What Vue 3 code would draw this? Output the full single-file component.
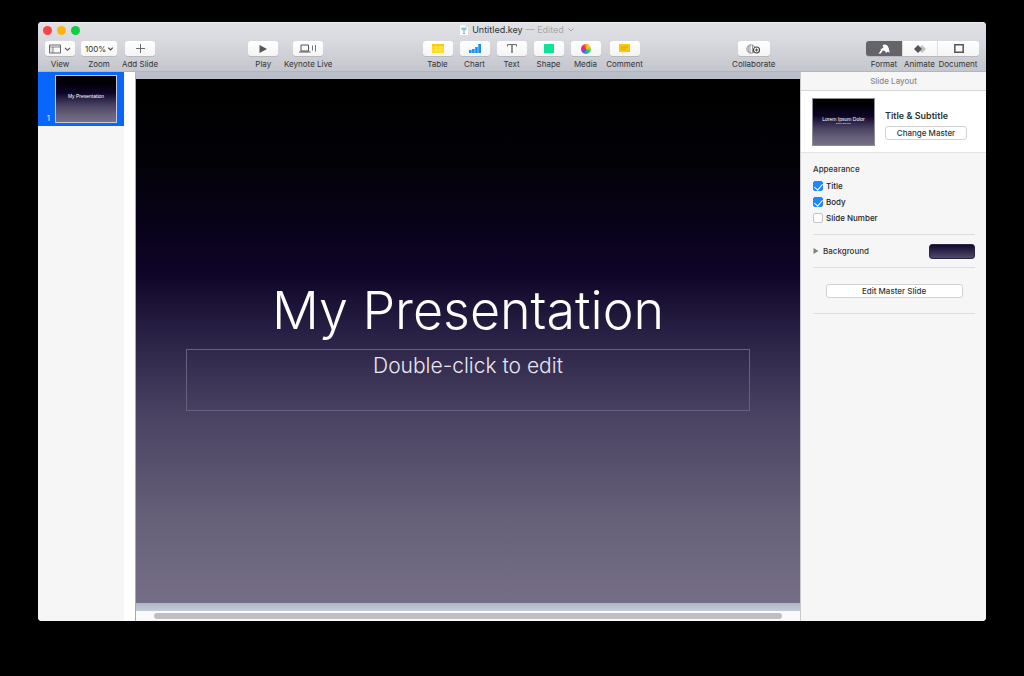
<script setup>
import { ref } from 'vue'

const left = [
  { id: 'view', label: 'View', w: 'w30' },
  { id: 'zoom', label: 'Zoom', w: 'w36' },
  { id: 'add', label: 'Add Slide', w: 'w34' }
]
const play = [
  { id: 'play', label: 'Play', w: 'w30' },
  { id: 'live', label: 'Keynote Live', w: 'w46' }
]
const insert = [
  { id: 'table', label: 'Table', w: 'w30' },
  { id: 'chart', label: 'Chart', w: 'w30' },
  { id: 'text', label: 'Text', w: 'w30' },
  { id: 'shape', label: 'Shape', w: 'w30' },
  { id: 'media', label: 'Media', w: 'w30' },
  { id: 'comment', label: 'Comment', w: 'w34' }
]
const collab = [{ id: 'collab', label: 'Collaborate', w: 'w42' }]
const groups = [
  { name: 'left', items: left },
  { name: 'play-group', items: play },
  { name: 'insert', items: insert },
  { name: 'collab-group', items: collab }
]
const panes = [
  { id: 'format', label: 'Format', w: 'w36' },
  { id: 'animate', label: 'Animate', w: 'w35' },
  { id: 'document', label: 'Document', w: 'w42' }
]
const pane = ref('format')
const options = ref([
  { id: 'opt-title', label: 'Title', on: true },
  { id: 'opt-body', label: 'Body', on: true },
  { id: 'opt-number', label: 'Slide Number', on: false }
])
</script>

<template>
  <div class="desktop">
    <main class="window">
      <header class="bar">
        <div class="titlebar">
          <div class="lights">
            <button class="light red" aria-label="Close"></button>
            <button class="light yellow" aria-label="Minimize"></button>
            <button class="light green" aria-label="Full screen"></button>
          </div>
          <div class="doc">
            <svg width="8" height="10" viewBox="0 0 8 10"><path d="M0 0h6l2 2v8H0z" fill="#fafcfd" /><path d="M6 0v2h2z" fill="#c5ced4" /><path d="M1.500 3h5l-.7 2H2.200z" fill="#8fd0e2" stroke="#6fb0c4" stroke-width=".5" /><path d="M4 5v3.500M3 8.500h2" stroke="#7b9aa6" stroke-width=".8" /></svg>
            <span class="name">Untitled.key</span>
            <span class="edited">— Edited</span>
            <svg width="6" height="4" viewBox="0 0 6 4"><path d="M.5.5L3 3 5.500.5" fill="none" stroke="#a0a2aa" /></svg>
          </div>
        </div>
        <nav class="toolbar">
          <div v-for="g in groups" :key="g.name" class="group" :class="g.name">
            <div v-for="t in g.items" :key="t.id" class="tool" :class="t.w">
              <button class="btn" :class="t.id" :aria-labelledby="'l-' + t.id">
                <svg v-if="t.id === 'view'" width="22" height="10" viewBox="0 0 22 10"><path d="M.5 1h11v8H.5z" fill="none" stroke="#686868" /><path d="M1 3h10M4 3v6" fill="none" stroke="#686868" stroke-width=".8" /><path d="M1.500 5h2M1.500 7h2" stroke="#aaa" stroke-width=".8" /><path d="M16 3.800l2.500 2.500L21 3.800" fill="none" stroke="#4c4c4c" stroke-width="1.100" /></svg>
                <template v-else-if="t.id === 'zoom'">
                  <span>100%</span>
                  <svg width="5" height="4" viewBox="0 0 5 4"><path d="M.3.7l2.200 2.200L4.700.7" fill="none" stroke="#444" stroke-width="1.100" /></svg>
                </template>
                <svg v-else-if="t.id === 'add'" width="9" height="9" viewBox="0 0 9 9"><path d="M4.500 0v9M0 4.500h9" stroke="#6c6c6c" /></svg>
                <svg v-else-if="t.id === 'play'" width="8" height="8" viewBox="0 0 8 8"><path d="M.5 0L8 4 .5 8z" fill="#555" /></svg>
                <svg v-else-if="t.id === 'live'" width="18" height="9" viewBox="0 0 18 9"><path d="M2 1h7.500v6H2z" fill="none" stroke="#555" /><path d="M0 8h11.500" stroke="#555" stroke-width="1.200" /><path d="M13.500 1.500v5M16.500 1v6.500" stroke="#777" /></svg>
                <svg v-else-if="t.id === 'table'" width="12" height="9" viewBox="0 0 12 9"><rect width="12" height="9" rx=".5" fill="#ffda12" /><rect width="12" height="2.700" fill="#f8c900" /><path d="M0 2.900h12M0 6h12M4 0v9M8 0v9" stroke="#fff0a0" stroke-width=".5" /></svg>
                <svg v-else-if="t.id === 'chart'" width="12" height="9" viewBox="0 0 12 9"><path d="M0 6h2.600v3H0zM3.100 5h2.600v4H3.100zM6.200 3h2.600v6H6.200zM9.300 0H12v9H9.300z" fill="#1592f0" /></svg>
                <svg v-else-if="t.id === 'text'" width="10" height="9" viewBox="0 0 10 9"><path d="M.5 2.500V.6h9v1.900" fill="none" stroke="#666" /><path d="M5 .6V9" stroke="#5c5c5c" stroke-width="1.300" /></svg>
                <svg v-else-if="t.id === 'shape'" width="10" height="9" viewBox="0 0 10 9"><rect width="10" height="9" rx=".5" fill="#0be396" /></svg>
                <span v-else-if="t.id === 'media'" class="wheel"></span>
                <svg v-else-if="t.id === 'comment'" width="11" height="9" viewBox="0 0 11 9"><path d="M0 0h11v8H4.500L3 9V8H0z" fill="#fac80a" /><path d="M2 3h7M2 5.200h5" stroke="#d39a08" stroke-width=".8" /></svg>
                <svg v-else width="15" height="10" viewBox="0 0 15 10"><g fill="none" stroke="#808080" stroke-width=".8"><circle cx="5" cy="5" r="4.200" /><path d="M4 1v8M6.500 1v8M2.800 2c-.9 2-.9 4 0 6M8.500 2.500v2" /></g><circle cx="10.500" cy="6" r="3" fill="#fff" stroke="#484848" stroke-width="1.200" /><path d="M10.500 4.500v3M9 6h3" stroke="#484848" /></svg>
              </button>
              <span :id="'l-' + t.id" class="lbl">{{ t.label }}</span>
            </div>
          </div>
          <div class="group panes">
            <div v-for="t in panes" :key="t.id" class="tool" :class="t.w">
              <button class="btn seg" :class="{ active: pane === t.id }" :aria-labelledby="'l-' + t.id" @click="pane = t.id">
                <svg v-if="t.id === 'format'" width="12" height="10" viewBox="0 0 12 10"><path d="M4.500 1.500C5.500.3 7.500 0 9 1.300c1.500 1.400 2 3.700 2.700 7.200L9.500 7.700 8 9 6.800 6.800 5 6.500 2.500 9.700.5 9.500 3 6.300 2.500 5.500 5.500 3.500z" fill="#fff" /></svg>
                <svg v-else-if="t.id === 'animate'" width="12" height="8" viewBox="0 0 12 8"><path d="M8 0l4 4-4 4-4-4z" fill="#c3c3c3" /><path d="M4 0l4 4-4 4-4-4z" fill="#555" /></svg>
                <svg v-else width="10" height="9" viewBox="0 0 10 9"><path d="M.8.8h8.400v7.400H.8z" fill="none" stroke="#555" stroke-width="1.500" /></svg>
              </button>
              <span :id="'l-' + t.id" class="lbl">{{ t.label }}</span>
            </div>
          </div>
        </nav>
      </header>

      <div class="body">
        <aside class="nav">
          <div class="thumb-row">
            <span class="num">1</span>
            <div class="slide-bg thumb"><span>My Presentation</span></div>
          </div>
        </aside>

        <section class="canvas">
          <div class="slide slide-bg">
            <h1>My Presentation</h1>
            <p class="subtitle">Double-click to edit</p>
          </div>
          <div class="mat"></div>
          <div class="track"><div class="scroll"></div></div>
        </section>

        <aside class="inspector">
          <h2>Slide Layout</h2>
          <div class="master">
            <div class="slide-bg preview"><span class="lorem">Lorem Ipsum Dolor</span><span class="sub">Donec quis nunc</span></div>
            <div class="master-info">
              <strong>Title &amp; Subtitle</strong>
              <button class="push">Change Master</button>
            </div>
          </div>
          <div class="settings">
            <fieldset class="appearance">
              <legend>Appearance</legend>
              <label v-for="o in options" :key="o.id" :for="o.id"><input :id="o.id" v-model="o.on" type="checkbox" />{{ o.label }}</label>
            </fieldset>
            <div class="background">
              <button class="disclose"><svg width="6" height="6" viewBox="0 0 6 6"><path d="M.5 0L5.500 3l-5 3z" fill="#808080" /></svg>Background</button>
              <button class="swatch" aria-label="Background fill"></button>
            </div>
            <div class="edit"><button class="push">Edit Master Slide</button></div>
          </div>
        </aside>
      </div>
    </main>
  </div>
</template>

<style>
body { background: #000; }
</style>

<style scoped>
* { box-sizing: border-box; }
button { font: inherit; color: inherit; border: 0; padding: 0; margin: 0; background: none; }
svg { display: block; flex: none; }
.desktop { min-height: 100vh; padding: 22px 38px 55px; display: flex; font-family: Inter, "Liberation Sans", sans-serif; font-size: 8px; line-height: 10px; color: #333; background: #000; }
.window { flex: 1; min-width: 0; display: flex; flex-direction: column; border-radius: 4px; overflow: hidden; background: #f6f6f6; }
.bar { height: 50px; flex: none; background: linear-gradient(#e0e1e5, #d8d9df 40%, #c4c6cd); border-top: 1px solid #eee; border-bottom: 1px solid #b2b5bc; }
.titlebar { height: 18px; display: grid; grid-template-columns: 1fr auto 1fr; align-items: center; padding: 0 5px; }
.lights { display: flex; gap: 5px; padding-bottom: 4px; }
.light { width: 9px; height: 9px; border-radius: 50%; }
.red { background: #fc4346; }
.yellow { background: #fdb60d; }
.green { background: #0bcf41; }
.doc { display: flex; align-items: center; gap: 4px; font-size: 9px; padding-bottom: 4px; padding-left: 10px; white-space: nowrap; }
.edited { color: #a5a7ae; }
.doc .edited { margin-left: -1px; }
.toolbar { display: flex; justify-content: space-between; padding: 0 7px; }
.group { display: flex; gap: 6px; }
.insert, .play-group { gap: 7px; }
.panes { gap: 0; }
.tool { display: flex; flex-direction: column; align-items: center; gap: 3px; }
.w30 { width: 30px; }
.w34 { width: 34px; }
.w35 { width: 35px; }
.w36 { width: 36px; }
.w42 { width: 42px; }
.w46 { width: 46px; }
.btn { width: 30px; height: 15px; border-radius: 3px; background: linear-gradient(#fff, #f4f4f5); box-shadow: 0 1px 0 #b7b9bf; display: flex; align-items: center; justify-content: center; gap: 2px; }
.btn.zoom { width: 36px; }
.btn.collab { width: 32px; }
.lbl { white-space: nowrap; }
.wheel { width: 10px; height: 10px; border-radius: 50%; background: conic-gradient(#ff9a17, #ffd21c 40deg, #a8d829 80deg, #31c26b 130deg, #28a4dd 175deg, #5b56d6 220deg, #c32fc7 260deg, #f32270 300deg, #fb4a2b 335deg, #ff9a17); }
.seg { width: 100%; border-radius: 0; border-left: 1px solid #dedee0; }
.tool:first-child .seg { border-radius: 3px 0 0 3px; border-left: 0; }
.tool:last-child .seg { border-radius: 0 3px 3px 0; }
.seg.active { background: #656569; }
.body { flex: 1; display: flex; min-height: 0; }
.nav { width: 97px; flex: none; background: #f6f6f6; border-right: 11px solid #fff; }
.thumb-row { height: 54px; background: #0866fd; display: flex; align-items: flex-end; justify-content: space-between; padding: 3px 7px 3px 9px; color: #fff; }
.num { font-size: 7px; line-height: 8px; }
.slide-bg { background: linear-gradient(#000, #020106 15%, #0e0427 37%, #2a2246 49%, #4b4463 65%, #666079 84%, #756e86); color: #fff; }
.thumb { width: 62px; height: 48px; border: 1px solid #c8cad6; display: flex; justify-content: center; padding-top: 16px; font-size: 5px; line-height: 8px; white-space: nowrap; font-family: "Liberation Sans", sans-serif; }
.canvas { flex: 1; min-width: 0; display: flex; flex-direction: column; border-left: 1px solid #a9a9b2; border-top: 7px solid #b9bec9; }
.slide { flex: 1; display: flex; flex-direction: column; align-items: center; padding: 198px 50px 0; font-weight: 300; }
h1 { margin: 0; font-size: 52px; line-height: 68px; font-weight: 300; white-space: nowrap; }
.subtitle { margin: 4px 0 0; width: 100%; height: 62px; border: 1px solid #67617e; text-align: center; font-size: 21px; line-height: 32px; color: #e9e7f2; }
.mat { height: 8px; background: linear-gradient(#b0b5c1, #c4ccd6); }
.track { height: 10px; background: #fafafa; padding: 2px 18px; }
.scroll { height: 6px; border-radius: 3px; background: #bfbfbf; }
.inspector { width: 186px; flex: none; background: #f6f6f6; border-left: 1px solid #c9c9cd; font-weight: 500; }
h2 { margin: 0; height: 19px; font-size: 8px; line-height: 18px; font-weight: 500; color: #8b8b8b; text-align: center; border-bottom: 1px solid #d5d5d5; }
.master { height: 62px; background: #fff; border-bottom: 1px solid #e4e4e4; display: flex; gap: 10px; padding: 7px 11px; }
.preview { width: 63px; height: 48px; border: 1px solid #8d8d96; display: flex; flex-direction: column; align-items: center; padding-top: 17px; white-space: nowrap; font-family: "Liberation Sans", sans-serif; font-weight: 400; }
.lorem { font-size: 5px; line-height: 6px; }
.sub { font-size: 2px; line-height: 3px; }
.master-info { display: flex; flex-direction: column; padding-top: 12px; gap: 4px; }
.master-info strong { font-size: 9px; line-height: 12px; font-weight: 600; }
.push { height: 14px; width: 82px; border: 1px solid #d2d2d2; border-radius: 3px; background: #fff; }
.settings { padding: 10px 11px 0 12px; }
.appearance { border: 0; margin: 0; padding: 0 0 10px; display: flex; flex-direction: column; gap: 4px; border-bottom: 1px solid #dddde0; }
legend { padding: 0; margin-bottom: 5px; line-height: 12px; }
label { display: flex; align-items: center; gap: 3px; height: 12px; color: #222; }
input { appearance: none; margin: 0; width: 10px; height: 10px; border: 1px solid #c4c4c4; border-radius: 2px; background: #fff; display: grid; place-items: center; }
input:checked { background: #1e87fb; border-color: #1e87fb; }
input:checked::after { content: ""; width: 4px; height: 7px; margin-bottom: 2px; border: solid #fff; border-width: 0 1px 1px 0; transform: rotate(40deg); }
.background { height: 33px; display: flex; align-items: center; justify-content: space-between; border-bottom: 1px solid #dddde0; }
.disclose { display: flex; align-items: center; gap: 4px; }
.swatch { width: 46px; height: 15px; border-radius: 3px; border: 1px solid #2b2743; background: linear-gradient(#120a2e, #50496a); }
.edit { height: 46px; display: flex; align-items: center; justify-content: center; border-bottom: 1px solid #dddde0; }
.edit .push { width: 137px; }
</style>
